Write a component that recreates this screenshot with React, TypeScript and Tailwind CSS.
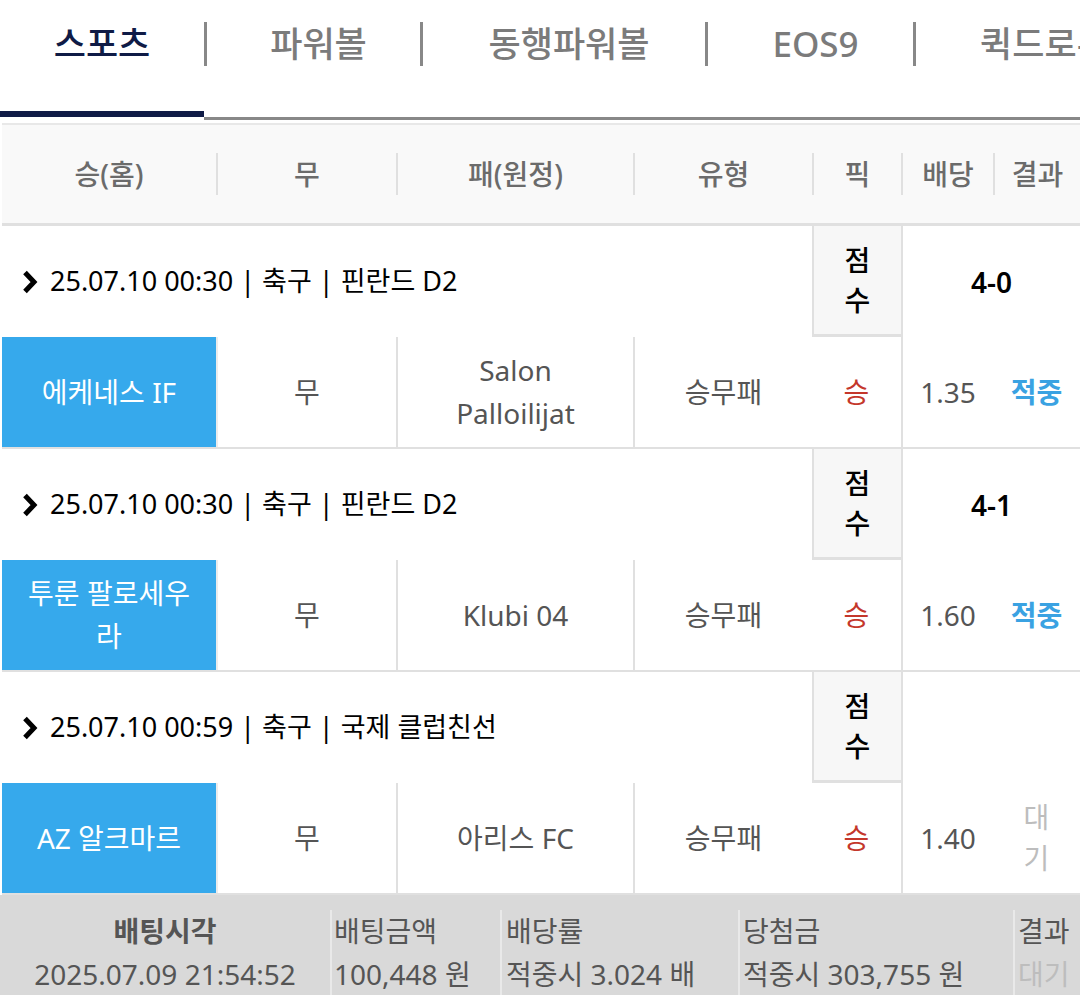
import clsx from 'clsx';

type Bet = {
  time: string;
  sport: string;
  league: string;
  home: string;
  away: string;
  score: string;
  odds: string;
  result: '적중' | '대기';
};

const bets: Bet[] = [
  { time: '25.07.10 00:30', sport: '축구', league: '핀란드 D2', home: '에케네스 IF', away: 'Salon Palloilijat', score: '4-0', odds: '1.35', result: '적중' },
  { time: '25.07.10 00:30', sport: '축구', league: '핀란드 D2', home: '투룬 팔로세우라', away: 'Klubi 04', score: '4-1', odds: '1.60', result: '적중' },
  { time: '25.07.10 00:59', sport: '축구', league: '국제 클럽친선', home: 'AZ 알크마르', away: '아리스 FC', score: '', odds: '1.40', result: '대기' },
];

const tabs = [
  { label: '스포츠', w: 'w-[204px]' },
  { label: '파워볼', w: 'w-[216px]' },
  { label: '동행파워볼', w: 'w-[285px]' },
  { label: 'EOS9', w: 'w-[208px]' },
  { label: '퀵드로우', w: 'w-[250px]' },
];

const headers = ['승(홈)', '무', '패(원정)', '유형', '픽', '배당', '결과'];

const cols = 'grid grid-cols-[214px_180px_237px_179px_89px_92px_1fr]';

function Chevron() {
  return (
    <svg width="17" height="26" viewBox="0 0 17 26" className="shrink-0">
      <path d="M4 3.5 L13 13 L4 22.5" fill="none" stroke="#000" strokeWidth="5" strokeLinejoin="miter" />
    </svg>
  );
}

function BetBlock({ bet }: { bet: Bet }) {
  return (
    <div className={clsx(cols, 'border-b-2 border-[#e0e0e0] text-[28px]')}>
      {/* game info row */}
      <div className="col-span-4 flex h-[111px] items-center gap-[12px] pl-[19px] text-[27px] text-black">
        <Chevron />
        <span>
          {bet.time} | {bet.sport} | {bet.league}
        </span>
      </div>
      <div className="flex items-center justify-center border-b-[3px] border-l-2 border-[#e0e0e0] bg-[#f7f7f7] text-center font-medium leading-[40px] text-black">
        점<br />수
      </div>
      <div className="col-span-2 flex items-center justify-center border-l-2 border-[#e0e0e0] font-semibold text-black">
        {bet.score}
      </div>

      {/* pick row */}
      <div className="flex h-[110px] items-center justify-center bg-[#36a9ec] px-6 text-center leading-[43px] text-white">
        {bet.home}
      </div>
      <div className="flex items-center justify-center border-l-2 border-[#ececec] text-[#555]">무</div>
      <div className="flex items-center justify-center border-l-2 border-[#e0e0e0] px-8 text-center leading-[43px] text-[#555]">
        {bet.away}
      </div>
      <div className="flex items-center justify-center border-l-2 border-[#e0e0e0] text-[#555]">승무패</div>
      <div className="flex items-center justify-center text-[#c4372b]">승</div>
      <div className="flex items-center justify-center border-l-2 border-[#e0e0e0] text-[#555]">{bet.odds}</div>
      <div className="flex items-center justify-center text-center">
        {bet.result === '적중' ? (
          <span className="font-bold text-[#3aa2e2]">적중</span>
        ) : (
          <span className="inline-block w-[30px] leading-[41px] text-[#bdbdbd]">대기</span>
        )}
      </div>
    </div>
  );
}

export default function App() {
  return (
    <div className="h-[995px] w-[1080px] overflow-hidden bg-white font-['Noto_Sans','Noto_Sans_CJK_KR',sans-serif]">
      {/* game tabs */}
      <div className="flex h-[120px] overflow-hidden">
        {tabs.map((tab, i) => (
          <div key={tab.label} className={clsx('flex shrink-0 flex-col', tab.w)}>
            <div className="flex-1 pt-[22px]">
              <div
                className={clsx(
                  'flex h-[44px] items-center justify-center whitespace-nowrap text-[35px] font-medium',
                  i > 0 && 'border-l-[3px] border-[#888] pl-[10px]',
                  i === 0 ? 'font-bold text-[#0f1b46]' : 'text-[#7b7b7b]'
                )}
              >
                {tab.label}
              </div>
            </div>
            <div className={clsx('h-[6px]', i === 0 && 'bg-[#0f1b46]')} />
            <div className={clsx('h-[3px]', i > 0 && 'bg-[#888]')} />
          </div>
        ))}
      </div>

      {/* bet table */}
      <div className="mt-[3px] pl-[2px]">
        <div className={clsx(cols, 'h-[103px] border-y-2 border-t-[#e8e8e8] border-b-[3px] border-b-[#e0e0e0] bg-[#f9f9f9]')}>
          {headers.map((h, i) => (
            <div key={h} className="flex items-center">
              <div
                className={clsx(
                  'flex h-[42px] w-full items-center justify-center whitespace-nowrap text-[28px] font-medium text-[#6b6b6b]',
                  i > 0 && 'border-l-2 border-[#e0e0e0]'
                )}
              >
                {h}
              </div>
            </div>
          ))}
        </div>

        {bets.map((bet, i) => (
          <BetBlock key={i} bet={bet} />
        ))}
      </div>

      {/* bet summary */}
      <div className="grid h-[100px] grid-cols-[330px_170px_238px_275px_1fr] bg-[#d9d9d9] text-[28px] leading-[43px] text-[#555]">
        <div className="pt-[15px] text-center">
          <div className="font-bold">배팅시각</div>
          <div className="whitespace-nowrap">2025.07.09 21:54:52</div>
        </div>
        <div className="mt-[15px] whitespace-nowrap border-l-2 border-[#e9e9e9] pl-[2px]">
          <div>배팅금액</div>
          <div>100,448 원</div>
        </div>
        <div className="mt-[15px] whitespace-nowrap border-l-2 border-[#e9e9e9] pl-[4px]">
          <div>배당률</div>
          <div>적중시 3.024 배</div>
        </div>
        <div className="mt-[15px] whitespace-nowrap border-l-2 border-[#e9e9e9] pl-[3px]">
          <div>당첨금</div>
          <div>적중시 303,755 원</div>
        </div>
        <div className="mt-[15px] whitespace-nowrap border-l-2 border-[#e9e9e9] pl-[3px]">
          <div>결과</div>
          <div className="text-[#bdbdbd]">대기</div>
        </div>
      </div>
    </div>
  );
}
